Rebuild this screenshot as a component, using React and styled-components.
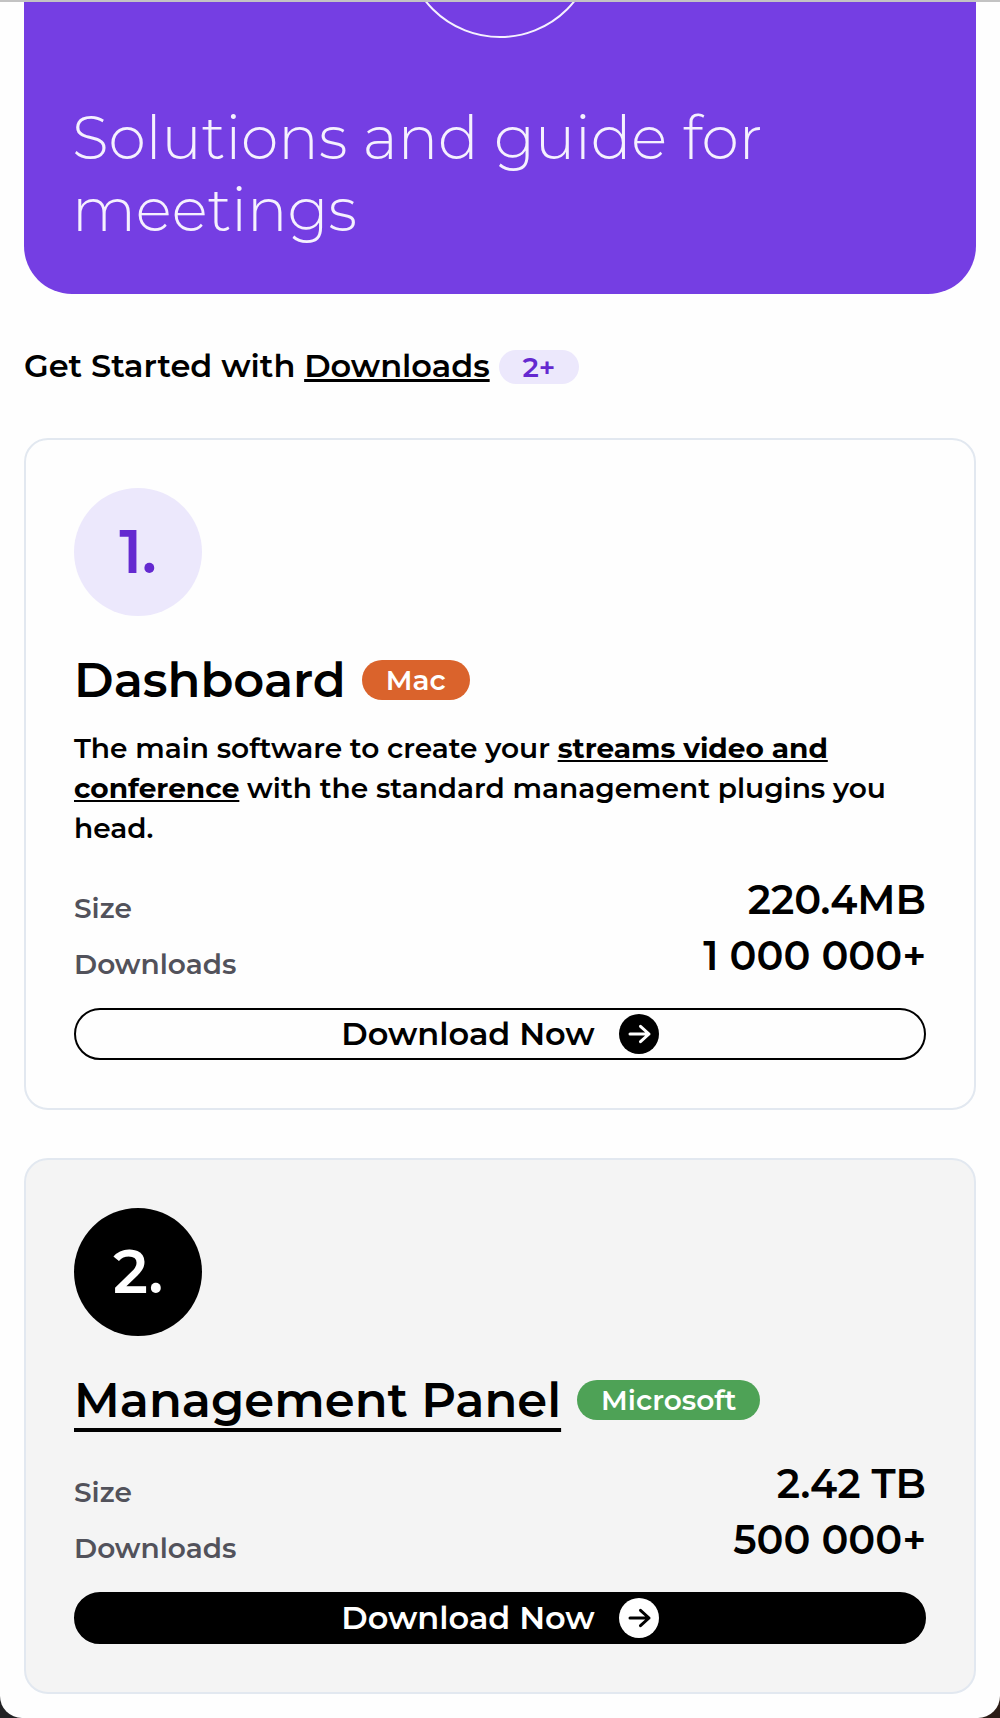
import React from "react";
import styled, { createGlobalStyle } from "styled-components";

const GlobalStyle = createGlobalStyle`
  *, *::before, *::after { box-sizing: border-box; }
  body {
    margin: 0;
    background: linear-gradient(90deg, #222224, #2b1c16);
    font-family: Montserrat, Inter, "Liberation Sans", sans-serif;
    font-weight: 600;
    color: #000;
    -webkit-font-smoothing: antialiased;
  }
`;

const Page = styled.main`
  height: 1718px;
  padding: 0 24px;
  overflow: hidden;
  background: #fefefe;
  border-top: 2px solid #c3c3c3;
  border-radius: 0 0 22px 22px;
`;

const Hero = styled.section`
  height: 292px;
  padding: 0 48px 48px;
  border-radius: 0 0 48px 48px;
  background: #753ee3;
  color: #f5f1fe;
`;

const RingWindow = styled.div`
  display: flex;
  justify-content: center;
  align-items: flex-end;
  height: 36px;
  margin-bottom: 64px;
  overflow: hidden;
`;

const Ring = styled.div`
  flex: none;
  width: 192px;
  height: 192px;
  border: 2px solid #f5f1fe;
  border-radius: 50%;
`;

const HeroTitle = styled.h1`
  margin: 0;
  font-size: 60px;
  font-weight: 300;
  line-height: 72px;
`;

const SectionTitle = styled.h2`
  height: 48px;
  margin: 48px 0;
  font-size: 32px;
  font-weight: 600;
  line-height: 48px;

  u {
    text-decoration-thickness: 3px;
    text-underline-offset: 2px;
    text-decoration-skip-ink: none;
  }
`;

const CountBadge = styled.span`
  padding: 0 24px;
  border-radius: 17px;
  background: #ece8fc;
  color: #6429d0;
  font-size: 28px;
  font-weight: 600;
  line-height: 1;
`;

const CardList = styled.div`
  display: flex;
  flex-direction: column;
  gap: 48px;
`;

const Card = styled.article`
  display: flex;
  flex-direction: column;
  padding: 48px;
  border: 2px solid #e2e8f0;
  border-radius: 24px;
  background: ${(p) => (p.$dark ? "#f4f4f4" : "#fefefe")};
`;

const Step = styled.div`
  display: grid;
  place-items: center;
  width: 128px;
  height: 128px;
  margin-bottom: 40px;
  border-radius: 50%;
  background: ${(p) => (p.$dark ? "#000" : "#ece8fc")};
  color: ${(p) => (p.$dark ? "#fff" : "#6429d0")};
  font-size: 60px;
  line-height: 60px;
`;

const TitleRow = styled.div`
  display: flex;
  align-items: center;
  gap: 16px;
  height: 48px;
`;

const CardTitle = styled.h3`
  margin: 0;
  font-size: 48px;
  font-weight: 600;
  line-height: 48px;
  text-decoration: ${(p) => (p.$underlined ? "underline" : "none")};
  text-decoration-thickness: 4px;
  text-underline-offset: 11px;
  text-decoration-skip-ink: none;
`;

const Tag = styled.span`
  padding: 0 24px;
  border-radius: 20px;
  background: ${(p) => p.$tone};
  color: #fff;
  font-size: 28px;
  line-height: 40px;
`;

const Description = styled.p`
  margin: 24px 0 0;
  font-size: 28px;
  line-height: 40px;

  u {
    font-weight: 700;
    text-decoration-thickness: 2px;
    text-underline-offset: 2px;
    text-decoration-skip-ink: none;
  }
`;

const Stats = styled.dl`
  margin: ${(p) => (p.$spaced ? "32px" : "24px")} 0 24px;
`;

const Stat = styled.div`
  display: flex;
  justify-content: space-between;
  align-items: flex-end;
`;

const StatLabel = styled.dt`
  color: #52525b;
  font-size: 28px;
  line-height: 40px;
`;

const StatValue = styled.dd`
  margin: 0;
  font-size: 40px;
  line-height: 56px;
`;

const DownloadButton = styled.button`
  display: flex;
  align-items: center;
  justify-content: center;
  gap: 24px;
  height: 52px;
  padding: 0;
  border: 2px solid #000;
  border-radius: 26px;
  background: ${(p) => (p.$dark ? "#000" : "transparent")};
  color: ${(p) => (p.$dark ? "#fff" : "#000")};
  font: inherit;
  font-size: 32px;
  line-height: 38px;
`;

const ArrowDisc = styled.svg`
  width: 40px;
  height: 40px;
  fill: none;
  stroke: ${(p) => (p.$dark ? "#000" : "#fff")};
  stroke-width: 3;
  stroke-linecap: round;
  stroke-linejoin: round;

  circle {
    fill: ${(p) => (p.$dark ? "#fff" : "#000")};
    stroke: none;
  }
`;

const ITEMS = [
  {
    step: "1.",
    title: "Dashboard",
    tag: "Mac",
    tone: "#da632c",
    description: (
      <>
        The main software to create your <u>streams video and conference</u> with
        the standard management plugins you head.
      </>
    ),
    size: "220.4MB",
    downloads: "1 000 000+",
  },
  {
    step: "2.",
    title: "Management Panel",
    tag: "Microsoft",
    tone: "#4ea256",
    size: "2.42 TB",
    downloads: "500 000+",
    dark: true,
  },
];

function DownloadCard({ item }) {
  const { dark } = item;
  return (
    <Card $dark={dark}>
      <Step $dark={dark}>{item.step}</Step>
      <TitleRow>
        <CardTitle $underlined={dark}>{item.title}</CardTitle>
        <Tag $tone={item.tone}>{item.tag}</Tag>
      </TitleRow>
      {item.description && <Description>{item.description}</Description>}
      <Stats $spaced={!item.description}>
        <Stat>
          <StatLabel>Size</StatLabel>
          <StatValue>{item.size}</StatValue>
        </Stat>
        <Stat>
          <StatLabel>Downloads</StatLabel>
          <StatValue>{item.downloads}</StatValue>
        </Stat>
      </Stats>
      <DownloadButton $dark={dark}>
        Download Now
        <ArrowDisc $dark={dark} viewBox="0 0 40 40" aria-hidden="true">
          <circle cx="20" cy="20" r="20" />
          <path d="M11 20H30M21.5 12.3L30 20L21.5 27.7" />
        </ArrowDisc>
      </DownloadButton>
    </Card>
  );
}

export default function App() {
  return (
    <>
      <GlobalStyle />
      <Page>
        <Hero>
          <RingWindow>
            <Ring />
          </RingWindow>
          <HeroTitle>Solutions and guide for meetings</HeroTitle>
        </Hero>
        <SectionTitle>
          Get Started with <u>Downloads</u> <CountBadge>2+</CountBadge>
        </SectionTitle>
        <CardList>
          {ITEMS.map((item) => (
            <DownloadCard key={item.title} item={item} />
          ))}
        </CardList>
      </Page>
    </>
  );
}
